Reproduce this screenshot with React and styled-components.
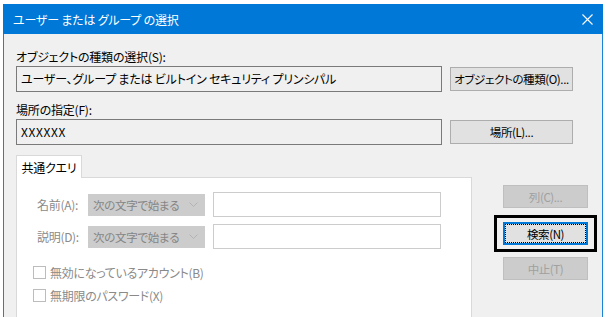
import { Fragment } from 'react';
import styled, { createGlobalStyle } from 'styled-components';

const GlobalStyle = createGlobalStyle`
  html, body {
    margin: 0;
    background: #ffffff;
  }
  body {
    font-family: "Noto Sans CJK JP", "Noto Sans", sans-serif;
    font-size: 12px;
    font-feature-settings: "palt";
    color: #000;
  }
`;

const Page = styled.div`
  padding: 4px 0 0 3px;
  height: 313px;
  overflow: hidden;
`;

const Window = styled.div`
  width: 600px;
  height: 330px;
  box-sizing: border-box;
  border-left: 1px solid #1a83d8;
  border-right: 1px solid #1a83d8;
  background: #f0f0f0;
`;

const TitleBar = styled.div`
  height: 30px;
  margin: 0 -1px;
  background: #0078d7;
  color: #ffffff;
  display: flex;
  align-items: center;
  padding: 0 10px 0 10px;
  font-size: 12px;
  letter-spacing: -0.2px;
`;

const CloseButton = styled.div`
  margin-left: auto;
  display: flex;
  align-items: center;
`;

const Body = styled.div`
  padding: 15px 0 0 12px;
`;

const Label = styled.div`
  line-height: 16px;
  height: 16px;
  letter-spacing: -0.2px;
`;

const FieldRow = styled.div`
  display: grid;
  grid-template-columns: 426px 123px;
  column-gap: 8px;
  align-items: center;
  margin-top: 1px;
  margin-bottom: ${p => p.$after || 0}px;
`;

const ReadOnlyBox = styled.div`
  box-sizing: border-box;
  height: 26px;
  border: 1px solid #7a7a7a;
  background: #f0f0f0;
  padding: 0 4px;
  line-height: 24px;
  letter-spacing: ${p => (p.$wide ? '0.6px' : '-0.2px')};
  white-space: nowrap;
`;

const Button = styled.div`
  box-sizing: border-box;
  height: 24px;
  border: 1px solid ${p => (p.$disabled ? '#bfbfbf' : p.$default ? '#0078d7' : '#adadad')};
  background: ${p => (p.$disabled ? '#cccccc' : '#e1e1e1')};
  color: ${p => (p.$disabled ? '#a0a0a0' : '#000')};
  box-shadow: ${p => (p.$default ? 'inset 0 0 0 1px #0078d7' : 'none')};
  outline: ${p => (p.$default ? '1px dotted #000' : 'none')};
  outline-offset: -3px;
  display: flex;
  align-items: center;
  justify-content: center;
  font-size: 11.5px;
  letter-spacing: -0.4px;
  white-space: nowrap;
`;

const QueryArea = styled.div`
  display: grid;
  grid-template-columns: 456px 85px;
  column-gap: 31px;
  align-items: start;
`;

const TabStrip = styled.div`
  display: flex;
  position: relative;
  z-index: 1;
  margin-bottom: -1px;
`;

const Tab = styled.div`
  box-sizing: border-box;
  width: 66px;
  height: 23px;
  border: 1px solid #d9d9d9;
  border-bottom: none;
  background: #ffffff;
  display: flex;
  align-items: center;
  justify-content: center;
  padding-top: 1px;
  letter-spacing: -0.2px;
`;

const TabPanel = styled.div`
  box-sizing: border-box;
  height: 160px;
  border: 1px solid #d9d9d9;
  background: #ffffff;
  padding: 14px 0 0 20px;
`;

const QueryGrid = styled.div`
  display: grid;
  grid-template-columns: 43px 117px 228px;
  grid-auto-rows: 25px;
  column-gap: 8px;
  row-gap: 7px;
  align-items: center;
`;

const DimLabel = styled.div`
  color: #8a8a8a;
  white-space: nowrap;
  letter-spacing: -0.3px;
`;

const Combo = styled.div`
  box-sizing: border-box;
  height: 22px;
  background: #cccccc;
  border: 1px solid #cccccc;
  color: #858585;
  display: flex;
  align-items: center;
  padding: 0 6px 0 4px;
  font-size: 11.5px;
  letter-spacing: -0.3px;
  white-space: nowrap;
`;

const ComboText = styled.span`
  flex: 1;
`;

const TextField = styled.div`
  box-sizing: border-box;
  height: 25px;
  border: 1px solid #cccccc;
  background: #ffffff;
`;

const CheckList = styled.div`
  display: flex;
  flex-direction: column;
  gap: 10px;
  margin: 17px 0 0 -4px;
`;

const CheckRow = styled.div`
  display: flex;
  align-items: center;
  gap: 4px;
  color: #8a8a8a;
  height: 13px;
  letter-spacing: -0.3px;
`;

const CheckBox = styled.div`
  box-sizing: border-box;
  width: 13px;
  height: 13px;
  border: 1px solid #bcbcbc;
  background: #ffffff;
`;

const SideButtons = styled.div`
  display: flex;
  flex-direction: column;
  padding-top: 30px;
`;

const SideButton = styled(Button)`
  height: 23px;
  margin-top: ${p => p.$top || 0}px;
  margin-bottom: ${p => p.$gap || 0}px;
`;

const Highlight = styled.div`
  position: relative;
  &::before {
    content: '';
    position: absolute;
    left: -9px;
    right: -9px;
    top: -7px;
    bottom: -7px;
    border: 3px solid #000;
    pointer-events: none;
  }
`;

const Chevron = () => (
  <svg width="9" height="5" viewBox="0 0 9 5">
    <polyline points="0.5,0.5 4.5,4.5 8.5,0.5" fill="none" stroke="#b3b3b3" strokeWidth="1" />
  </svg>
);

const CloseIcon = () => (
  <svg width="11" height="11" viewBox="0 0 11 11">
    <path d="M0.5 0.5 L10.5 10.5 M10.5 0.5 L0.5 10.5" stroke="#ffffff" strokeWidth="1.1" />
  </svg>
);

export default function App() {
  const queryRows = ['名前(A):', '説明(D):'];
  const checks = ['無効になっているアカウント(B)', '無期限のパスワード(X)'];

  return (
    <>
      <GlobalStyle />
      <Page>
        <Window>
          <TitleBar>
            ユーザー または グループ の選択
            <CloseButton>
              <CloseIcon />
            </CloseButton>
          </TitleBar>
          <Body>
            <Label>オブジェクトの種類の選択(S):</Label>
            <FieldRow $after={10}>
              <ReadOnlyBox>ユーザー、グループ または ビルトイン セキュリティ プリンシパル</ReadOnlyBox>
              <Button>オブジェクトの種類(O)...</Button>
            </FieldRow>
            <Label>場所の指定(F):</Label>
            <FieldRow $after={10}>
              <ReadOnlyBox $wide>XXXXXX</ReadOnlyBox>
              <Button>場所(L)...</Button>
            </FieldRow>
            <QueryArea>
              <div>
                <TabStrip>
                  <Tab>共通クエリ</Tab>
                </TabStrip>
                <TabPanel>
                  <QueryGrid>
                    {queryRows.map(label => (
                      <Fragment key={label}>
                        <DimLabel>{label}</DimLabel>
                        <Combo>
                          <ComboText>次の文字で始まる</ComboText>
                          <Chevron />
                        </Combo>
                        <TextField />
                      </Fragment>
                    ))}
                  </QueryGrid>
                  <CheckList>
                    {checks.map(text => (
                      <CheckRow key={text}>
                        <CheckBox />
                        {text}
                      </CheckRow>
                    ))}
                  </CheckList>
                </TabPanel>
              </div>
              <SideButtons>
                <SideButton $disabled $gap={14}>列(C)...</SideButton>
                <Highlight>
                  <SideButton $default>検索(N)</SideButton>
                </Highlight>
                <SideButton $disabled $top={12}>中止(T)</SideButton>
              </SideButtons>
            </QueryArea>
          </Body>
        </Window>
      </Page>
    </>
  );
}
